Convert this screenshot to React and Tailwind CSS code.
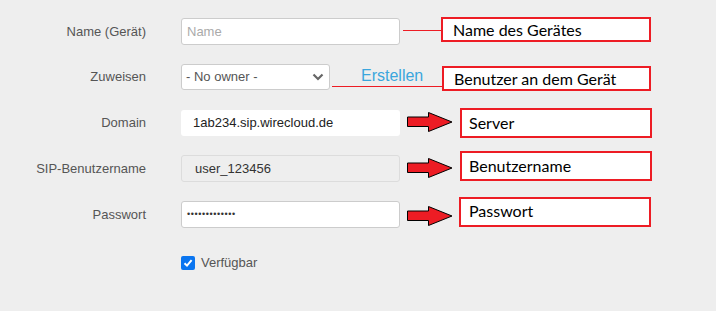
import React from "react";

const ARIAL = { fontFamily: '"Liberation Sans", Arial, sans-serif' };

function Arrow() {
  return (
    <svg width="46" height="20" viewBox="0 0 46 20" className="shrink-0 block">
      <polygon
        points="0.5,5 21.5,5 21.5,0.5 45,10 21.5,19.5 21.5,14.5 0.5,14.5"
        fill="#ed1c24"
        stroke="#000"
        strokeWidth="1"
      />
    </svg>
  );
}

function Note({ children, className }) {
  return (
    <div
      className={
        "shrink-0 border-2 border-[#ed1c24] bg-white flex items-center text-[16px] text-black " +
        className
      }
      style={{ fontFamily: 'Lato, "Open Sans", sans-serif' }}
    >
      {children}
    </div>
  );
}

export default function App() {
  const label = "w-[146px] shrink-0 text-right text-[13px] text-[#555]";
  return (
    <div
      className="w-[716px] h-[311px] overflow-hidden bg-[#eeeeee] pt-[17px]"
      style={ARIAL}
    >
      {/* Row 1 */}
      <div className="flex h-[28px]">
        <div className={label + " mt-[1px] leading-[28px]"}>Name (Gerät)</div>
        <div className="ml-[35px] mt-[1px] h-[27px] w-[219px] shrink-0 border border-[#ccc] rounded-[3px] bg-white pl-[5px] flex items-center text-[13px] text-[#aaa]">
          Name
        </div>
        <div className="ml-[3px] mt-[13px] w-[38px] h-px bg-[#ed1c24] shrink-0" />
        <Note className="w-[210px] h-[25px] pl-[10px]">Name des Gerätes</Note>
      </div>

      {/* Row 2 */}
      <div className="flex h-[27px] mt-[19px]">
        <div className={label + " leading-[26px]"}>Zuweisen</div>
        <div className="ml-[35px] h-[26px] w-[149px] shrink-0 border border-[#ccc] rounded-[3px] bg-white pl-[4px] pr-[4px] flex items-center justify-between text-[13px] text-[#555]">
          <span>- No owner -</span>
          <svg width="12" height="8" viewBox="0 0 12 8" className="mr-[1px]">
            <path d="M1.5 1.5 L6 6 L10.5 1.5" fill="none" stroke="#666" strokeWidth="2.2" />
          </svg>
        </div>
        <div className="ml-[2px] w-[110px] shrink-0 flex flex-col">
          <div className="mt-[2px] h-[20px] leading-[20px] pl-[29px] text-[16px] text-[#3aa6dd]">
            Erstellen
          </div>
          <div className="h-px bg-[#ed1c24]" />
        </div>
        <Note className="mt-[2px] w-[209px] h-[25px] pl-[10px]">Benutzer an dem Gerät</Note>
      </div>

      {/* Row 3 */}
      <div className="flex h-[30px] mt-[17px]">
        <div className={label + " leading-[30px]"}>Domain</div>
        <div className="ml-[35px] mt-[2px] h-[26px] w-[219px] shrink-0 rounded-[3px] bg-white pl-[12px] flex items-center text-[13px] text-[#222]">
          1ab234.sip.wirecloud.de
        </div>
        <div className="ml-[7px] mt-[4px]">
          <Arrow />
        </div>
        <Note className="ml-[7px] w-[192px] h-[30px] pl-[7px]">Server</Note>
      </div>

      {/* Row 4 */}
      <div className="flex h-[31px] mt-[13px]">
        <div className={label + " mt-[4px] h-[28px] leading-[28px]"}>SIP-Benutzername</div>
        <div className="ml-[35px] mt-[4px] h-[27px] w-[219px] shrink-0 border border-[#dcdcdc] rounded-[3px] bg-[#eeeeee] pl-[13px] flex items-center text-[13px] text-[#333]">
          user_123456
        </div>
        <div className="ml-[7px] mt-[7px]">
          <Arrow />
        </div>
        <Note className="ml-[7px] w-[192px] h-[30px] pl-[7px]">Benutzername</Note>
      </div>

      {/* Row 5 */}
      <div className="flex h-[31px] mt-[15px]">
        <div className={label + " mt-[4px] h-[28px] leading-[28px]"}>Passwort</div>
        <div className="ml-[35px] mt-[4px] h-[27px] w-[219px] shrink-0 border border-[#ccc] rounded-[3px] bg-white pl-[5px] flex items-center text-[9px] tracking-[0.6px] text-[#333]">
          •••••••••••••
        </div>
        <div className="ml-[7px] mt-[9px]">
          <Arrow />
        </div>
        <Note className="ml-[6px] w-[192px] h-[30px] pl-[8px] pb-[3px]">Passwort</Note>
      </div>

      {/* Checkbox */}
      <div className="flex items-center ml-[181px] mt-[28px] h-[14px]">
        <div className="w-[14px] h-[14px] rounded-[2px] bg-[#0a75f0] flex items-center justify-center shrink-0">
          <svg width="10" height="10" viewBox="0 0 10 10">
            <path d="M1.5 5.2 L4 7.6 L8.6 2.2" fill="none" stroke="#fff" strokeWidth="2" />
          </svg>
        </div>
        <span className="ml-[6px] text-[13px] text-[#555] leading-[14px]">Verfügbar</span>
      </div>
    </div>
  );
}
